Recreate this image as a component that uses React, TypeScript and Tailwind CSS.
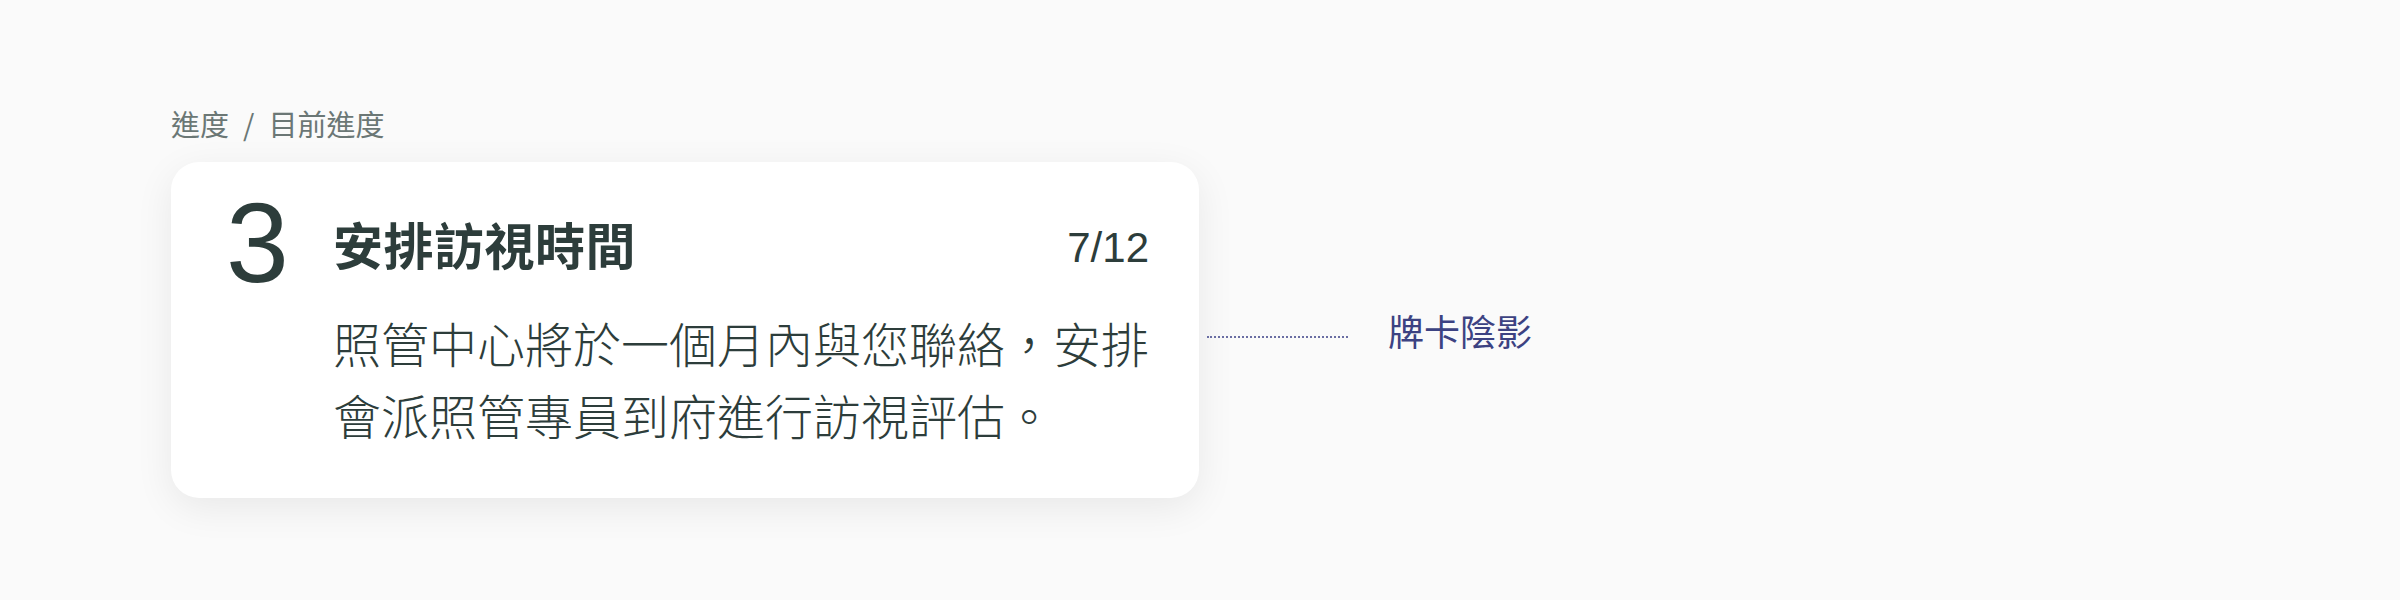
const cjk = { fontFamily: '"Noto Sans CJK TC", "Noto Sans", sans-serif' };
const latin = { fontFamily: '"Liberation Sans", Arial, sans-serif' };

export default function App() {
  return (
    <div className="min-h-[600px] w-full bg-[#fafafa] pl-[171px] pt-[109px]" style={cjk}>
      {/* Breadcrumb */}
      <div className="text-[29px] leading-none text-[#6b7775]">
        進度<span className="mx-[14px]">/</span>目前進度
      </div>

      <div className="mt-[24px] flex items-start">
        {/* Card */}
        <div className="flex w-[1028px] rounded-[28px] bg-white pb-[48px] pl-[55px] pr-[50px] pt-[25px] shadow-[0_10px_38px_rgba(0,0,0,0.075)]">
          <div className="w-[109px] text-[113px] leading-none text-[#2d3d3b]" style={latin}>
            3
          </div>
          <div className="flex-1">
            <div className="mt-[31px] flex items-start justify-between">
              <div className="text-[50px] font-bold leading-none tracking-[0.5px] text-[#2d3d3b]">
                安排訪視時間
              </div>
              <div className="mt-[9px] text-[42px] leading-none text-[#2d3d3b]" style={latin}>
                7/12
              </div>
            </div>
            <p className="mt-[37px] whitespace-nowrap text-[48px] font-light leading-[72px] text-[#2d3d3b]">
              照管中心將於一個月內與您聯絡，安排
              <br />
              會派照管專員到府進行訪視評估。
            </p>
          </div>
        </div>

        {/* Annotation */}
        <div className="ml-[8px] mt-[150px] flex items-start">
          <div className="mt-[24px] w-[141px] border-t-2 border-dotted border-[#6a6ea3]" />
          <span className="ml-[40px] text-[36px] leading-none text-[#3c4282]">牌卡陰影</span>
        </div>
      </div>
    </div>
  );
}
